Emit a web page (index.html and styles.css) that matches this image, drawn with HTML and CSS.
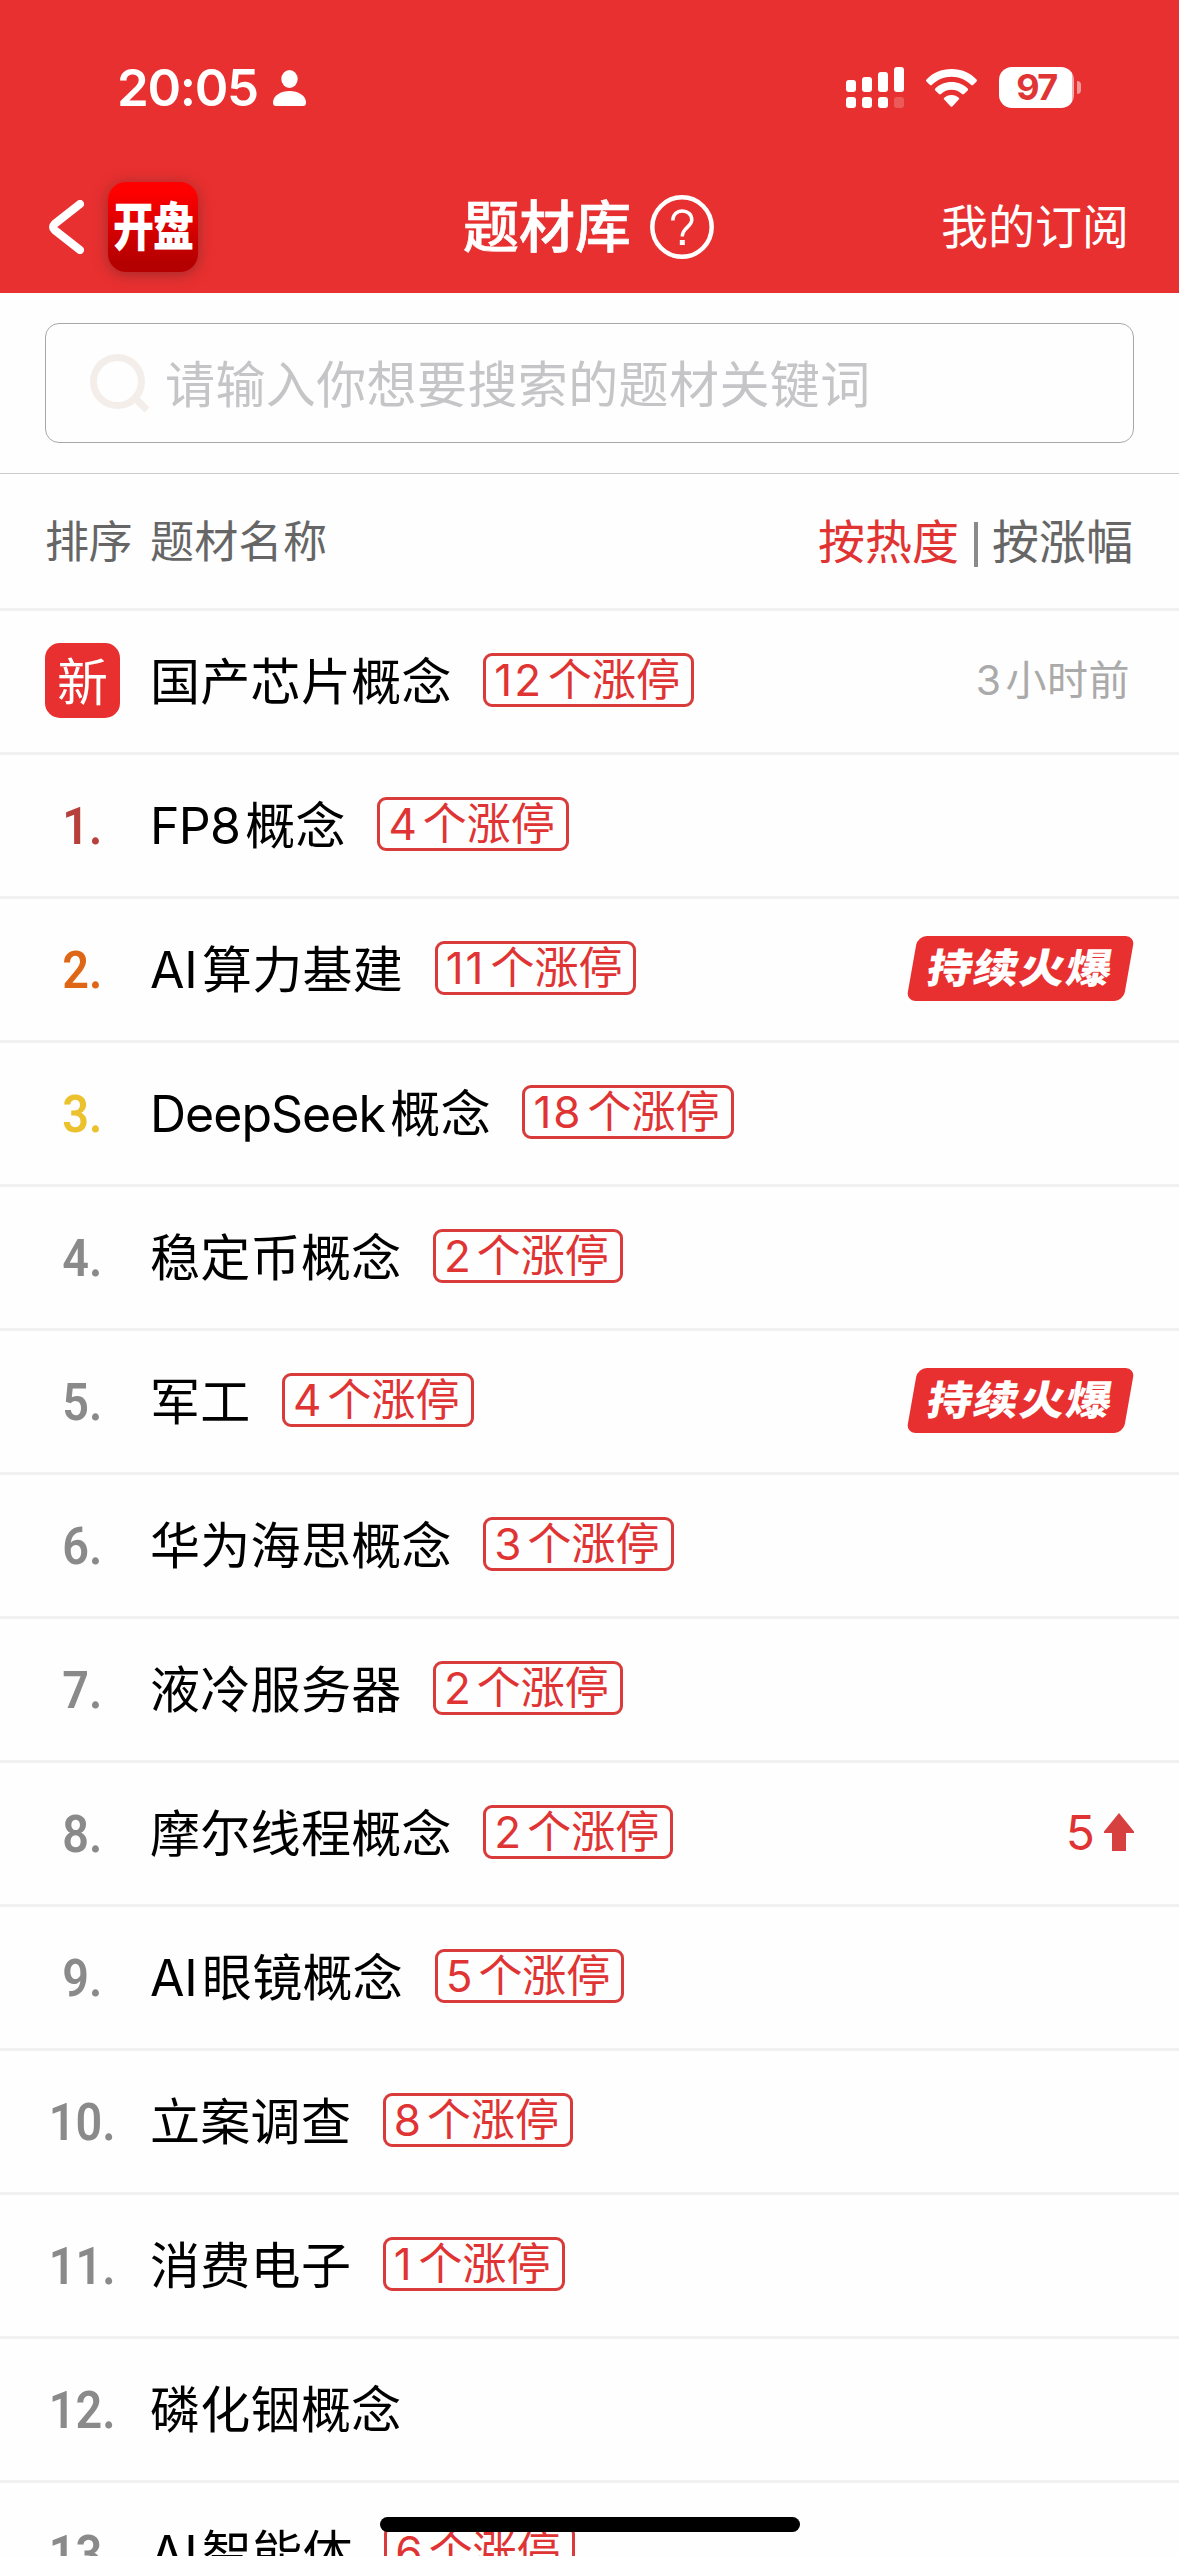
FILE: index.html
```html
<!DOCTYPE html>
<html lang="zh-CN">
<head>
<meta charset="utf-8">
<title>题材库</title>
<link rel="stylesheet" href="styles.css">
</head>
<body>
<div class="screen">
  <header class="header">
    <div class="status">
      <div class="status-left">
        <span class="clock">20:05</span>
        <svg class="person" viewBox="0 0 33 36"><ellipse cx="16.5" cy="9" rx="8.2" ry="9"/><path d="M3 36Q0 36 0 32.5C0 25.5 8 21 16.5 21S33 25.5 33 32.5Q33 36 30 36Z"/></svg>
      </div>
      <div class="status-right">
        <svg class="signal" viewBox="0 0 58 41"><rect x="0" y="13" width="10" height="12" rx="3"/><rect x="16" y="10" width="10" height="15" rx="3"/><rect x="32" y="5" width="10" height="20" rx="3"/><rect x="48" y="0" width="10" height="25" rx="3"/><rect x="0" y="30" width="10" height="11" rx="3"/><rect x="16" y="30" width="10" height="11" rx="3"/><rect x="32" y="30" width="10" height="11" rx="3"/><rect x="48" y="30" width="10" height="11" rx="3" opacity=".2"/></svg>
        <svg class="wifi" viewBox="0 0 51 38"><path d="M25.500 0C35.500 0 44.500 4 50.500 10.500Q51.500 11.600 50.500 12.600L47 16Q46 16.700 45 15.800C39.800 10.600 33 7.700 25.500 7.700S11.200 10.600 6 15.800Q5 16.700 4 16L.5 12.600Q-.5 11.600 .5 10.500C6.500 4 15.500 0 25.500 0Z"/><path d="M25.500 13C32 13 37.600 15.500 41.700 19.500Q42.600 20.500 41.700 21.500L38 25Q37.100 25.800 36 24.900C33.200 22.300 29.600 20.700 25.500 20.700S17.800 22.300 15 24.900Q13.900 25.800 13 25L9.300 21.500Q8.400 20.500 9.300 19.500C13.400 15.500 19 13 25.500 13Z"/><path d="M25.500 26C28.500 26 31 27.200 32.800 28.700Q33.700 29.600 32.800 30.600L26.500 37.300Q25.500 38.300 24.500 37.300L18.200 30.600Q17.300 29.600 18.200 28.700C20 27.200 22.500 26 25.500 26Z"/></svg>
        <div class="battery"><span class="battery-level">97</span></div>
      </div>
    </div>
    <nav class="nav">
      <div class="nav-left">
        <svg class="back" viewBox="0 0 36 54"><path d="M32 4 6.500 24Q3.500 27 6.500 30L32 50"/></svg>
        <div class="app-icon"><span>开盘</span></div>
      </div>
      <h1 class="title">题材库</h1>
      <svg class="help" viewBox="0 0 64 64"><circle cx="32" cy="32" r="29.700"/><path class="hook" d="M22.800 25.500C22.800 19.500 27 16 32.300 16S41.800 19.500 41.800 24.800C41.800 32 32.300 32.500 32.300 41.500"/><rect x="29.800" y="45" width="5" height="5"/></svg>
      <a class="subs">我的订阅</a>
    </nav>
  </header>

  <div class="search-area">
    <div class="search">
      <svg class="search-icon" viewBox="0 0 60 59"><circle cx="27.500" cy="27.500" r="24"/><path d="M45 44 57 56"/></svg>
      <span class="placeholder">请输入你想要搜索的题材关键词</span>
    </div>
  </div>

  <div class="columns">
    <span class="col-rank">排序</span>
    <span class="col-name">题材名称</span>
    <span class="sort on">按热度</span>
    <span class="bar"></span>
    <span class="sort">按涨幅</span>
  </div>

  <main class="list">
    <div class="row"><div class="rank"><span class="new">新</span></div><span class="name">国产芯片概念</span><span class="tag"><b class="one">12</b>个涨停</span><span class="time"><b>3</b>小时前</span></div>
    <div class="row"><div class="rank first"><span>1.</span></div><span class="name"><b class="fp">FP8</b>概念</span><span class="tag"><b>4</b>个涨停</span></div>
    <div class="row"><div class="rank second"><span>2.</span></div><span class="name"><b class="ai">AI</b>算力基建</span><span class="tag"><b class="one">11</b>个涨停</span><span class="hot"><i>持续火爆</i></span></div>
    <div class="row"><div class="rank third"><span>3.</span></div><span class="name"><b class="ds">DeepSeek</b>概念</span><span class="tag"><b class="one">18</b>个涨停</span></div>
    <div class="row"><div class="rank"><span>4.</span></div><span class="name">稳定币概念</span><span class="tag"><b>2</b>个涨停</span></div>
    <div class="row"><div class="rank"><span>5.</span></div><span class="name">军工</span><span class="tag"><b>4</b>个涨停</span><span class="hot"><i>持续火爆</i></span></div>
    <div class="row"><div class="rank"><span>6.</span></div><span class="name">华为海思概念</span><span class="tag"><b>3</b>个涨停</span></div>
    <div class="row"><div class="rank"><span>7.</span></div><span class="name">液冷服务器</span><span class="tag"><b>2</b>个涨停</span></div>
    <div class="row"><div class="rank"><span>8.</span></div><span class="name">摩尔线程概念</span><span class="tag"><b>2</b>个涨停</span><span class="rise"><b>5</b><svg viewBox="0 0 30 38"><path d="M15 0 30 18.500V20H22V38H8V20H0V18.500Z"/></svg></span></div>
    <div class="row"><div class="rank"><span>9.</span></div><span class="name"><b class="ai">AI</b>眼镜概念</span><span class="tag"><b>5</b>个涨停</span></div>
    <div class="row"><div class="rank"><span>10.</span></div><span class="name">立案调查</span><span class="tag"><b>8</b>个涨停</span></div>
    <div class="row"><div class="rank"><span>11.</span></div><span class="name">消费电子</span><span class="tag"><b class="one">1</b>个涨停</span></div>
    <div class="row"><div class="rank"><span>12.</span></div><span class="name">磷化铟概念</span></div>
    <div class="row"><div class="rank"><span>13.</span></div><span class="name"><b class="ai">AI</b>智能体</span><span class="tag"><b>6</b>个涨停</span></div>
  </main>
  <div class="home-bar"></div>
</div>
</body>
</html>
```
FILE: styles.css
```css
* {
  box-sizing: border-box;
}

body {
  margin: 0;
  background: #fff;
  font-family: Inter, "Noto Sans CJK SC", sans-serif;
  color: #000;
}

b,
i {
  font-weight: inherit;
  font-style: normal;
}

svg {
  display: block;
  flex: none;
}

.screen {
  position: relative;
  width: 1179px;
  height: 2556px;
  overflow: hidden;
  background: #fefefe;
}

.header {
  height: 293px;
  background: #e83030;
  color: #fff;
}

.status {
  display: flex;
  justify-content: space-between;
  align-items: center;
  height: 175px;
  padding: 0 98px 0 117px;
}

.status-left,
.status-right {
  display: flex;
  align-items: center;
}

.clock {
  width: 156px;
  font-size: 51px;
  font-weight: 600;
  letter-spacing: -1.300px;
  line-height: 60px;
}

.person {
  width: 33px;
  height: 36px;
  fill: #fff;
}

.signal {
  width: 58px;
  height: 41px;
  margin-right: 22px;
  fill: #fff;
}

.wifi {
  width: 51px;
  height: 38px;
  margin-right: 22px;
  fill: #fff;
}

.battery {
  display: flex;
  align-items: center;
}

.battery::after {
  content: "";
  width: 4px;
  height: 13px;
  margin-left: 3px;
  border-radius: 0 4px 4px 0;
  background: rgba(255, 255, 255, .5);
}

.battery-level {
  width: 75px;
  height: 41px;
  border-radius: 13px;
  background: linear-gradient(90deg, #fff 73px, #f6acac 73px);
  color: #e03535;
  font-size: 36px;
  font-weight: 700;
  letter-spacing: -1.500px;
  line-height: 41px;
  text-align: center;
}

.nav {
  display: flex;
  align-items: center;
  height: 104px;
  padding: 0 50px 0 48px;
}

.nav-left {
  display: flex;
  align-items: center;
  width: 415px;
}

.back {
  width: 36px;
  height: 54px;
  margin-right: 24px;
  fill: none;
  stroke: #fff;
  stroke-width: 8;
  stroke-linecap: round;
  stroke-linejoin: round;
}

.app-icon {
  display: flex;
  align-items: center;
  justify-content: center;
  width: 90px;
  height: 90px;
  border-radius: 18px;
  background: linear-gradient(#f00, #f00 10%, #b40000 90%);
  box-shadow: 0 2px 14px rgba(110, 40, 40, .6);
}

.app-icon span {
  font-size: 41px;
  font-weight: 900;
  letter-spacing: -1px;
  line-height: 50px;
  transform: scaleY(1.280);
}

.title {
  width: 187px;
  margin: 0;
  font-size: 56px;
  font-weight: 500;
  line-height: 80px;
  -webkit-text-stroke: .7px #fff;
}

.help {
  width: 64px;
  height: 64px;
  fill: #fff;
}

.help circle,
.help .hook {
  fill: none;
  stroke: #fff;
  stroke-width: 4.500;
}

.help .hook {
  stroke-width: 3.500;
}

.subs {
  margin-left: auto;
  font-size: 47px;
  line-height: 70px;
}

.search-area {
  height: 181px;
  padding: 30px 45px;
  border-bottom: 1px solid #ccc;
}

.search {
  display: flex;
  align-items: center;
  height: 120px;
  padding-left: 44px;
  border: 1px solid #a8a8a8;
  border-radius: 14px;
  color: #c5c5c7;
  font-size: 50px;
  letter-spacing: .4px;
  line-height: 70px;
}

.search-icon {
  width: 60px;
  height: 59px;
  margin-right: 15px;
  fill: none;
  stroke: #f3eeea;
  stroke-width: 7;
}

.placeholder {
  padding-top: 3px;
}

.columns {
  display: flex;
  align-items: center;
  height: 137px;
  padding: 2px 46px 0 45px;
  border-bottom: 3px solid #f1f1f1;
  color: #666;
  font-size: 44px;
  line-height: 64px;
}

.col-rank {
  width: 105px;
  letter-spacing: -.5px;
}

.col-name {
  letter-spacing: .3px;
}

.sort {
  font-size: 47px;
}

.sort.on {
  margin-left: auto;
  color: #e23333;
}

.bar {
  width: 4px;
  height: 45px;
  margin: 4px 14px 0 15px;
  background: #8a8a8a;
}

.row {
  display: flex;
  align-items: center;
  height: 144px;
  padding-right: 45px;
  border-bottom: 3px solid #f1f1f1;
}

.rank {
  display: flex;
  justify-content: center;
  width: 105px;
  margin: 0 15px 0 30px;
  color: #8a8a8a;
  font-family: Roboto, sans-serif;
  font-size: 52px;
  font-weight: 600;
  line-height: 60px;
}

.rank span:not(.new) {
  padding-top: 2px;
  transform: scaleX(.9);
}

.rank.first {
  color: #b6403c;
}

.rank.second {
  color: #df6614;
}

.rank.third {
  color: #ebc12d;
}

.new {
  width: 75px;
  height: 75px;
  margin-bottom: 2px;
  border-radius: 15px;
  background: #e83030;
  color: #fff;
  font-family: "Noto Sans CJK SC", sans-serif;
  font-size: 51px;
  font-weight: 400;
  line-height: 73px;
  text-align: center;
}

.name {
  margin-right: 31.500px;
  font-size: 50px;
  letter-spacing: .3px;
  line-height: 70px;
  white-space: nowrap;
}

.name .fp {
  margin-right: 5px;
  letter-spacing: -.7px;
}

.name .ai {
  margin-right: 4.600px;
  letter-spacing: -.3px;
}

.name .ds {
  margin-right: 5.500px;
  letter-spacing: -1px;
}

.tag {
  height: 54px;
  margin-bottom: 3px;
  padding: 0 11px 0 8px;
  border: 3px solid #d93a3a;
  border-radius: 9px;
  color: #e03434;
  font-size: 44px;
  line-height: 49px;
  white-space: nowrap;
}

.tag b {
  margin-right: 6px;
}

.tag .one {
  margin-right: 5px;
  letter-spacing: 2px;
}

.time {
  margin: 0 0 4px auto;
  padding-right: 4px;
  color: #aaa;
  font-size: 41px;
  letter-spacing: .5px;
  line-height: 50px;
}

.time b {
  margin-right: 4px;
}

.hot {
  display: flex;
  align-items: center;
  justify-content: center;
  width: 217px;
  height: 65px;
  margin: 0 5px 3px auto;
  border-radius: 9px;
  background: #e83030;
  transform: skewX(-10deg);
}

.hot i {
  color: #fff;
  font-size: 45px;
  font-weight: 900;
  letter-spacing: 1.300px;
  line-height: 64px;
  transform: scaleY(.9);
}

.rise {
  display: flex;
  align-items: center;
  gap: 9px;
  margin: 0 0 3px auto;
  color: #e03434;
  font-size: 48px;
}

.rise svg {
  width: 30px;
  height: 38px;
  fill: #d6413f;
}

.home-bar {
  position: absolute;
  left: 380px;
  top: 2517px;
  width: 420px;
  height: 15px;
  border-radius: 8px;
  background: #000;
}
```
